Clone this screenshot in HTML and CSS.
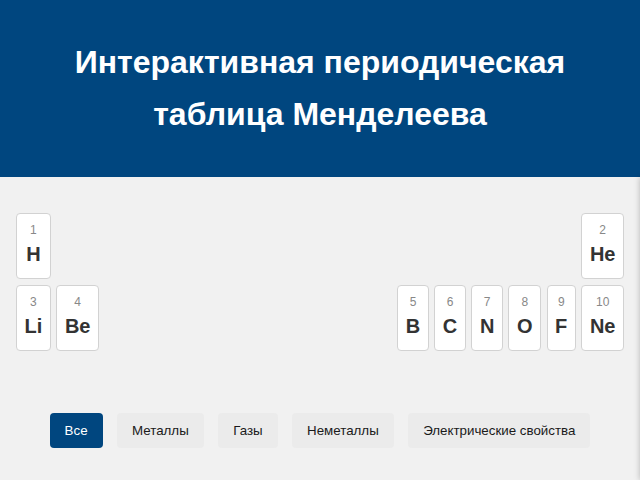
FILE: index.html
```html
<!DOCTYPE html>
<html lang="ru">
<head>
<meta charset="utf-8">
<title>Интерактивная периодическая таблица Менделеева</title>
<link rel="stylesheet" href="styles.css">
</head>
<body>
<header class="header">
  <h1 class="title">Интерактивная периодическая таблица Менделеева</h1>
</header>
<main class="main">
  <div class="table">
    <div class="el c1"><span class="num">1</span><span class="sym">H</span></div>
    <div class="el c18"><span class="num">2</span><span class="sym">He</span></div>
    <div class="el c1"><span class="num">3</span><span class="sym">Li</span></div>
    <div class="el c2"><span class="num">4</span><span class="sym">Be</span></div>
    <div class="el c13"><span class="num">5</span><span class="sym">B</span></div>
    <div class="el c14"><span class="num">6</span><span class="sym">C</span></div>
    <div class="el c15"><span class="num">7</span><span class="sym">N</span></div>
    <div class="el c16"><span class="num">8</span><span class="sym">O</span></div>
    <div class="el c17"><span class="num">9</span><span class="sym">F</span></div>
    <div class="el c18"><span class="num">10</span><span class="sym">Ne</span></div>
  </div>
  <div class="controls">
    <button class="btn active">Все</button>
    <button class="btn">Металлы</button>
    <button class="btn">Газы</button>
    <button class="btn">Неметаллы</button>
    <button class="btn">Электрические свойства</button>
  </div>
</main>
<aside class="panel"></aside>
</body>
</html>
```
FILE: styles.css
```css
html, body {
  margin: 0;
  padding: 0;
  height: 100%;
  overflow: hidden;
}
body {
  background: #f1f1f1;
  font-family: "Liberation Sans", Arial, sans-serif;
  color: #333;
}
.header {
  background: #00467f;
  color: #fff;
  padding: 36px 20px 37px;
  text-align: center;
}
.title {
  margin: 0;
  font-size: 32px;
  line-height: 52px;
  font-weight: bold;
}
.main {
  padding: 36px 16px 0;
}
.table {
  display: grid;
  grid-template-columns: auto auto repeat(10, 1fr) auto auto auto auto auto auto;
  gap: 6px 5.6px;
}
.el {
  background: #fff;
  border: 1px solid #d2d2d2;
  border-radius: 4px;
  padding: 9px 7.5px 12px;
  text-align: center;
  display: flex;
  flex-direction: column;
  align-items: center;
}
.num {
  font-size: 12px;
  line-height: 14px;
  color: #888;
  margin-bottom: 5px;
}
.sym {
  font-size: 20px;
  line-height: 24px;
  font-weight: bold;
  color: #333;
}
.c1 { grid-column: 1; }
.c2 { grid-column: 2; }
.c13 { grid-column: 13; }
.c14 { grid-column: 14; }
.c15 { grid-column: 15; }
.c16 { grid-column: 16; }
.c17 { grid-column: 17; }
.c18 { grid-column: 18; }
.controls {
  display: flex;
  justify-content: center;
  gap: 14.45px;
  margin-top: 62px;
}
.btn {
  font-family: "Liberation Sans", Arial, sans-serif;
  font-size: 13.333px;
  line-height: normal;
  padding: 10px 15px;
  border: none;
  border-radius: 4px;
  background: #ebebeb;
  color: #1a1a1a;
}
.btn.active {
  background: #00467f;
  color: #fff;
}
.panel {
  position: fixed;
  top: 177px;
  left: 100%;
  width: 300px;
  bottom: 0;
  background: #fff;
  box-shadow: 0 0 6px rgba(0, 0, 0, 0.25);
}
```
